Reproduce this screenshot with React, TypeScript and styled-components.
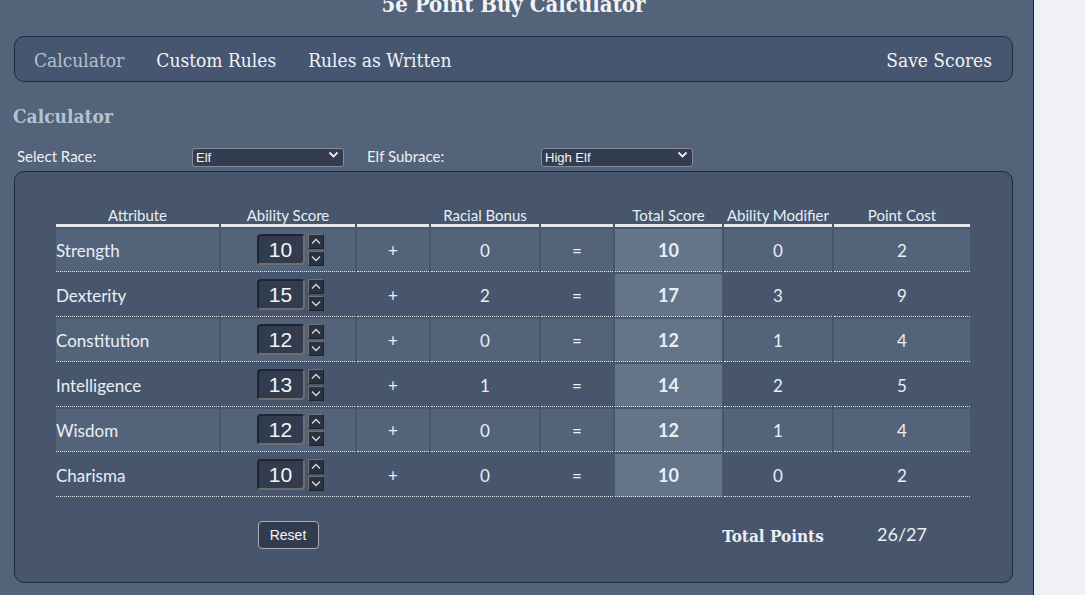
import React from "react";
import styled, { createGlobalStyle } from "styled-components";

const SLAB = `"DejaVu Serif Condensed", "DejaVu Serif", serif`;
const SANS = `Lato, "Noto Sans", sans-serif`;

const GlobalStyle = createGlobalStyle`
  html, body { margin: 0; padding: 0; }
  body { background: #f0f1f5; overflow: hidden; font-family: ${SANS}; }
`;

const Page = styled.div`
  width: 1034px;
  min-height: 595px;
  box-sizing: border-box;
  background: #53637a;
  border-right: 1px solid #1b2738;
  padding: 0 20px 0 14px;
  overflow: hidden;
`;

const Title = styled.h1`
  margin: -10px 0 17px;
  height: 29px;
  line-height: 29px;
  text-align: center;
  font-family: ${SLAB};
  font-weight: 700;
  font-size: 22px;
  color: #f1f2f4;
`;

const Nav = styled.nav`
  height: 46px;
  box-sizing: border-box;
  border: 1px solid #1d2a3d;
  border-radius: 10px;
  background: #465670;
  display: flex;
  align-items: center;
  gap: 32px;
  padding: 2px 20px 0 19px;
`;

const NavItem = styled.span<{ $active?: boolean }>`
  font-family: ${SLAB};
  font-size: 19px;
  color: ${(p) => (p.$active ? "#b3c2d3" : "#f0f2f5")};
  white-space: nowrap;
  &:last-child { margin-left: auto; }
`;

const Heading = styled.h2`
  margin: 20px 0 0 -1px;
  height: 28px;
  line-height: 28px;
  font-family: ${SLAB};
  font-weight: 700;
  font-size: 19px;
  color: #b3c3d4;
`;

const SelectRow = styled.div`
  display: grid;
  grid-template-columns: 175px 152px 23px 174px 152px;
  align-items: center;
  margin: 15px 0 0 3px;
  height: 21px;
`;

const Label = styled.label`
  font-family: ${SANS};
  font-size: 15px;
  color: #eef1f5;
`;

const SelectWrap = styled.div`
  position: relative;
  width: 152px;
  height: 19px;
`;

const Select = styled.select`
  appearance: none;
  width: 100%;
  height: 19px;
  box-sizing: border-box;
  background: #343d4f;
  color: #f3f5f8;
  border: 1px solid #858b96;
  border-radius: 3px;
  font-family: "Liberation Sans", Arial, sans-serif;
  font-size: 13px;
  padding: 0 0 0 3px;
  line-height: 17px;
  outline: none;
`;

const Chevron = styled.svg`
  position: absolute;
  right: 5px;
  top: 5px;
  pointer-events: none;
`;

const Panel = styled.section`
  margin-top: 5px;
  box-sizing: border-box;
  height: 412px;
  border: 1px solid #1d2a3d;
  border-radius: 10px;
  background: #47566d;
  padding: 31px 0 0 39px;
`;

const Table = styled.table`
  border-collapse: separate;
  border-spacing: 2px;
  table-layout: fixed;
  width: 918px;
`;

const Th = styled.th`
  font-family: ${SANS};
  font-weight: 400;
  font-size: 15px;
  color: #e9eef4;
  height: 19px;
  padding: 0;
  vertical-align: bottom;
  line-height: 18px;
  border-bottom: 3px solid #e6e8ec;
`;

const Td = styled.td<{ $shade?: boolean; $total?: boolean; $left?: boolean }>`
  height: 42px;
  padding: 0;
  text-align: ${(p) => (p.$left ? "left" : "center")};
  font-family: ${SANS};
  font-size: ${(p) => (p.$total ? "18px" : "17px")};
  font-weight: ${(p) => (p.$total ? 700 : 400)};
  color: #eaeff5;
  background: ${(p) => (p.$total ? "#647589" : p.$shade ? "#53637a" : "transparent")};
  border-bottom: 1px dotted #e3e6ea;
`;

const FootTd = styled.td`
  padding: 20px 0 0;
  text-align: center;
  vertical-align: top;
`;

const Spinner = styled.div`
  display: inline-flex;
  align-items: flex-start;
  gap: 3px;
  vertical-align: middle;
  margin-left: 4px;
`;

const NumBox = styled.div`
  width: 48px;
  height: 31px;
  box-sizing: border-box;
  background: #333c4e;
  border: 2px solid;
  border-color: #1f2530 #6e6e6e #6e6e6e #1f2530;
  border-radius: 4px;
  font-family: "Liberation Sans", Arial, sans-serif;
  font-size: 21px;
  line-height: 27px;
  color: #f2f5f8;
  text-align: center;
`;

const Steps = styled.div`
  display: flex;
  flex-direction: column;
  gap: 2px;
`;

const Step = styled.div`
  width: 16px;
  height: 15px;
  box-sizing: border-box;
  background: #2b323f;
  border: 1px solid;
  border-color: #6f737a #1e232c #1e232c #6f737a;
  display: flex;
  align-items: center;
  justify-content: center;
`;

const ResetButton = styled.button`
  width: 61px;
  height: 28px;
  box-sizing: border-box;
  background: #333c4e;
  color: #f2f5f8;
  border: 1px solid #a9adb3;
  border-radius: 4px;
  font-family: "Liberation Sans", Arial, sans-serif;
  font-size: 14px;
  padding: 0;
  margin-top: 2px;
`;

const TotalLabel = styled.div`
  font-family: ${SLAB};
  font-weight: 700;
  font-size: 17px;
  color: #eceff3;
  margin: 7px 0 0 -10px;
  white-space: nowrap;
`;

const TotalValue = styled.div`
  font-family: ${SANS};
  font-size: 18px;
  color: #eceff3;
  margin-top: 4px;
`;

const ChevronIcon = ({ up }: { up?: boolean }) => (
  <svg width="10" height="7" viewBox="0 0 10 7">
    <path
      d={up ? "M1 5.5 L5 1.5 L9 5.5" : "M1 1.5 L5 5.5 L9 1.5"}
      fill="none"
      stroke="#d8dce2"
      strokeWidth="1.3"
    />
  </svg>
);

const rows = [
  { name: "Strength", score: 10, bonus: 0, total: 10, mod: 0, cost: 2 },
  { name: "Dexterity", score: 15, bonus: 2, total: 17, mod: 3, cost: 9 },
  { name: "Constitution", score: 12, bonus: 0, total: 12, mod: 1, cost: 4 },
  { name: "Intelligence", score: 13, bonus: 1, total: 14, mod: 2, cost: 5 },
  { name: "Wisdom", score: 12, bonus: 0, total: 12, mod: 1, cost: 4 },
  { name: "Charisma", score: 10, bonus: 0, total: 10, mod: 0, cost: 2 },
];

const widths = [163, 134, 72, 108, 72, 107, 108, 136];

const DropChevron = () => (
  <Chevron width="11" height="8" viewBox="0 0 11 8">
    <path d="M1.5 1.5 L5.5 5.5 L9.5 1.5" fill="none" stroke="#f0f2f5" strokeWidth="1.8" />
  </Chevron>
);

export default function App() {
  return (
    <>
      <GlobalStyle />
      <Page>
        <Title>5e Point Buy Calculator</Title>
        <Nav>
          <NavItem $active>Calculator</NavItem>
          <NavItem>Custom Rules</NavItem>
          <NavItem>Rules as Written</NavItem>
          <NavItem>Save Scores</NavItem>
        </Nav>
        <Heading>Calculator</Heading>
        <SelectRow>
          <Label>Select Race:</Label>
          <SelectWrap>
            <Select defaultValue="Elf">
              <option>Elf</option>
            </Select>
            <DropChevron />
          </SelectWrap>
          <span />
          <Label>Elf Subrace:</Label>
          <SelectWrap>
            <Select defaultValue="High Elf">
              <option>High Elf</option>
            </Select>
            <DropChevron />
          </SelectWrap>
        </SelectRow>
        <Panel>
          <Table>
            <colgroup>
              {widths.map((w, i) => (
                <col key={i} style={{ width: w }} />
              ))}
            </colgroup>
            <thead>
              <tr>
                <Th>Attribute</Th>
                <Th>Ability Score</Th>
                <Th />
                <Th>Racial Bonus</Th>
                <Th />
                <Th>Total Score</Th>
                <Th>Ability Modifier</Th>
                <Th>Point Cost</Th>
              </tr>
            </thead>
            <tbody>
              {rows.map((r, i) => {
                const shade = i % 2 === 0;
                return (
                  <tr key={r.name}>
                    <Td $left $shade={shade}>{r.name}</Td>
                    <Td $shade={shade}>
                      <Spinner>
                        <NumBox>{r.score}</NumBox>
                        <Steps>
                          <Step><ChevronIcon up /></Step>
                          <Step><ChevronIcon /></Step>
                        </Steps>
                      </Spinner>
                    </Td>
                    <Td $shade={shade}>+</Td>
                    <Td $shade={shade}>{r.bonus}</Td>
                    <Td $shade={shade}>=</Td>
                    <Td $total>{r.total}</Td>
                    <Td $shade={shade}>{r.mod}</Td>
                    <Td $shade={shade}>{r.cost}</Td>
                  </tr>
                );
              })}
            </tbody>
            <tfoot>
              <tr>
                <FootTd />
                <FootTd>
                  <ResetButton>Reset</ResetButton>
                </FootTd>
                <FootTd />
                <FootTd />
                <FootTd />
                <FootTd />
                <FootTd>
                  <TotalLabel>Total Points</TotalLabel>
                </FootTd>
                <FootTd>
                  <TotalValue>26/27</TotalValue>
                </FootTd>
              </tr>
            </tfoot>
          </Table>
        </Panel>
      </Page>
    </>
  );
}
